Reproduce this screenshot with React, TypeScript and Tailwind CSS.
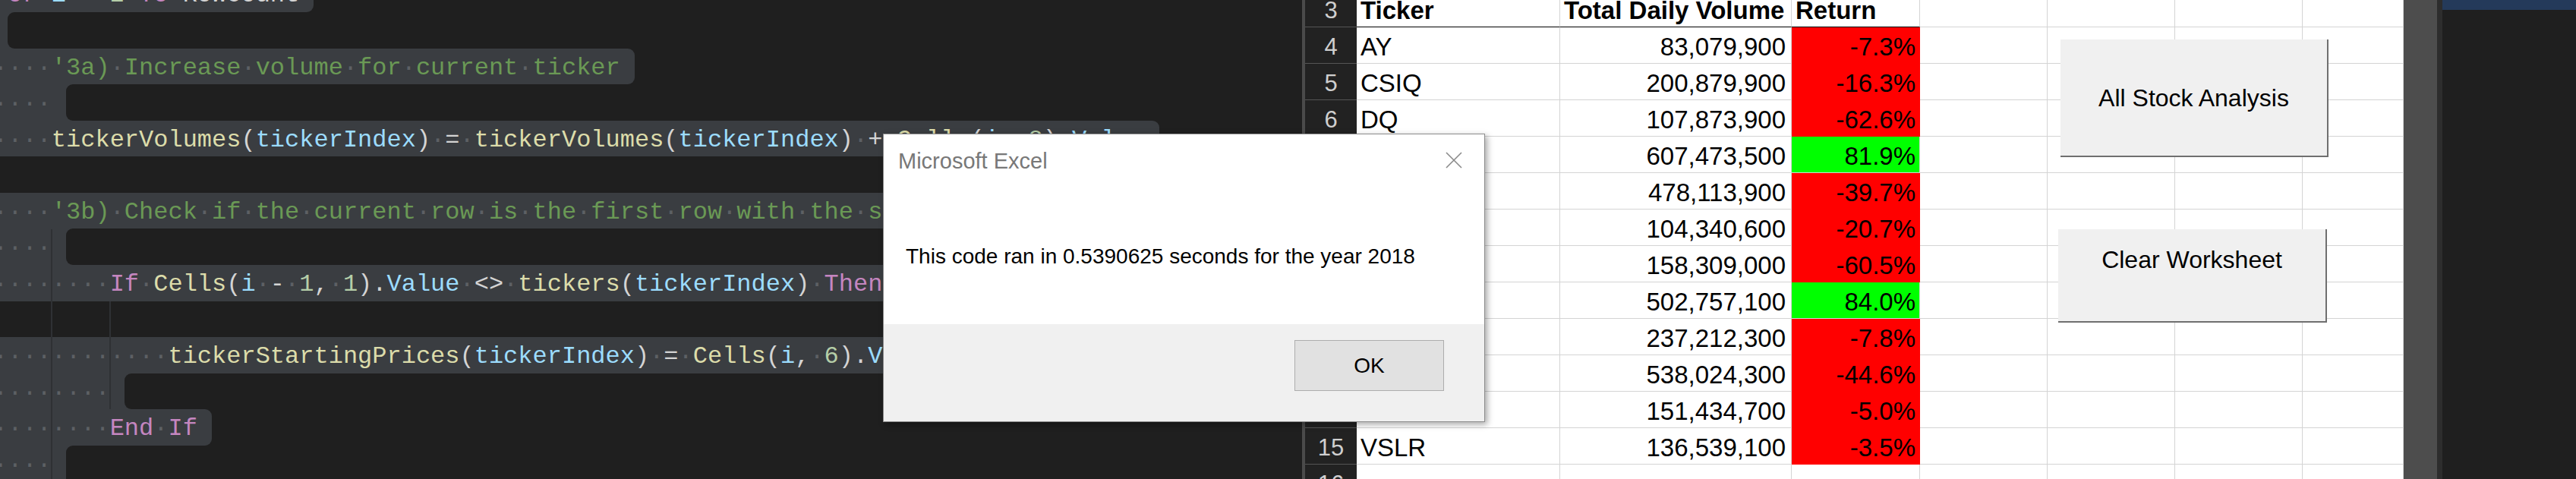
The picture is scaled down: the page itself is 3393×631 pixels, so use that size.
import React from 'react'

type Tok = [string, string]

const CW = 19.2

const kw = 'text-[#c586c0]'
const fn = 'text-[#dcdcaa]'
const vr = 'text-[#9cdcfe]'
const nm = 'text-[#b5cea8]'
const op = 'text-[#d4d4d4]'
const cm = 'text-[#6a9955]'

const ws = (n: number): Tok => [' '.repeat(n), op]

// code lines, top to bottom; sel = selected width in chars (undefined -> text length + 1)
const codeLines: { toks: Tok[]; sel?: number }[] = [
  { toks: [['For', kw], [' ', op], ['i', vr], [' = ', op], ['2', nm], [' ', op], ['To', kw], [' ', op], ['RowCount', op]] },
  { toks: [], sel: 1 },
  { toks: [ws(4), ["'3a) Increase volume for current ticker", cm]] },
  { toks: [ws(4)] },
  {
    toks: [
      ws(4), ['tickerVolumes', fn], ['(', op], ['tickerIndex', vr], [')', op], [' = ', op],
      ['tickerVolumes', fn], ['(', op], ['tickerIndex', vr], [')', op], [' + ', op],
      ['Cells', fn], ['(', op], ['i', vr], [', ', op], ['8', nm], [')', op], ['.', op], ['Value', vr],
    ],
  },
  { toks: [], sel: 0 },
  { toks: [ws(4), ["'3b) Check if the current row is the first row with the selected tickerIndex.", cm]] },
  { toks: [ws(4)] },
  {
    toks: [
      ws(8), ['If', kw], [' ', op], ['Cells', fn], ['(', op], ['i', vr], [' - ', op], ['1', nm], [', ', op],
      ['1', nm], [')', op], ['.', op], ['Value', vr], [' <> ', op], ['tickers', fn], ['(', op],
      ['tickerIndex', vr], [')', op], [' ', op], ['Then', kw],
    ],
  },
  { toks: [], sel: 0 },
  {
    toks: [
      ws(12), ['tickerStartingPrices', fn], ['(', op], ['tickerIndex', vr], [')', op], [' = ', op],
      ['Cells', fn], ['(', op], ['i', vr], [', ', op], ['6', nm], [')', op], ['.', op], ['Value', vr],
    ],
  },
  { toks: [ws(8)] },
  { toks: [ws(8), ['End If', kw]] },
  { toks: [ws(4)] },
  { toks: [ws(4)] },
]

const selChars = codeLines.map((l) =>
  l.sel !== undefined ? l.sel : l.toks.reduce((s, t) => s + t[0].length, 0) + 1
)

function renderToks(toks: Tok[]) {
  const out: React.ReactNode[] = []
  toks.forEach(([text, cls], ti) => {
    text.split(/( +)/).forEach((part, pi) => {
      if (!part) return
      if (part[0] === ' ') {
        out.push(
          <span key={`${ti}-${pi}`} className="text-[#5d6064]">
            {'·'.repeat(part.length)}
          </span>
        )
      } else {
        out.push(
          <span key={`${ti}-${pi}`} className={cls}>
            {part}
          </span>
        )
      }
    })
  })
  return out
}

function CodeLine({ idx }: { idx: number }) {
  const w = selChars[idx]
  const prev = idx > 0 ? selChars[idx - 1] : 0
  const next = idx < selChars.length - 1 ? selChars[idx + 1] : 0
  return (
    <div className="flex h-[47.6px] shrink-0">
      <div
        className={`h-full shrink-0 overflow-visible whitespace-pre bg-[#3a3d41] leading-[52px] ${
          prev < w ? 'rounded-tr-[9px]' : ''
        } ${next < w ? 'rounded-br-[9px]' : ''}`}
        style={{ width: `${w * CW}px` }}
      >
        {renderToks(codeLines[idx].toks)}
      </div>
      <div className="h-full flex-1 bg-[#3a3d41]">
        <div
          className={`h-full w-full bg-[#1f1f1f] ${prev > w ? 'rounded-tl-[9px]' : ''} ${
            next > w ? 'rounded-bl-[9px]' : ''
          }`}
        />
      </div>
    </div>
  )
}

const rows: [string, string, string, boolean][] = [
  ['AY', '83,079,900', '-7.3%', false],
  ['CSIQ', '200,879,900', '-16.3%', false],
  ['DQ', '107,873,900', '-62.6%', false],
  ['ENPH', '607,473,500', '81.9%', true],
  ['FSLR', '478,113,900', '-39.7%', false],
  ['HASI', '104,340,600', '-20.7%', false],
  ['JKS', '158,309,000', '-60.5%', false],
  ['RUN', '502,757,100', '84.0%', true],
  ['SEDG', '237,212,300', '-7.8%', false],
  ['SPWR', '538,024,300', '-44.6%', false],
  ['TERP', '151,434,700', '-5.0%', false],
  ['VSLR', '136,539,100', '-3.5%', false],
]

const cell = 'shrink-0 border-r border-b border-[#d4d4d4] overflow-hidden whitespace-nowrap leading-[52px]'

function EmptyCells() {
  return (
    <>
      <div className={`${cell} w-[168px]`} />
      <div className={`${cell} w-[168px]`} />
      <div className={`${cell} w-[168px]`} />
      <div className={`${cell} w-[133px]`} />
    </>
  )
}

function RowHead({ n }: { n: number }) {
  return (
    <div className="w-[68px] shrink-0 border-b border-[#555555] bg-[#222222] text-center text-[31px] leading-[52px] text-[#cfcfcf]">
      {n}
    </div>
  )
}

export default function App() {
  return (
    <div className="relative flex h-[631px] w-[3393px] overflow-hidden bg-[#1f1f1f]">
      {/* VS Code editor with selected VBA */}
      <div className="relative w-[1715px] shrink-0 overflow-hidden font-['Liberation_Mono',monospace] text-[32px]">
        <div className="-ml-[9px] -mt-[31.7px] flex flex-col">
          {codeLines.map((_, i) => (
            <CodeLine key={i} idx={i} />
          ))}
        </div>
        {/* indent guides */}
        <div className="absolute left-[67px] top-[302px] h-[340px] w-[2px] bg-[#2f3134]" />
        <div className="absolute left-[144px] top-[397px] h-[142px] w-[2px] bg-[#2f3134]" />
      </div>

      {/* Excel sheet */}
      <div className="relative flex shrink-0 font-['Liberation_Sans',Arial,sans-serif] text-[33px] text-black">
        <div className="w-[4px] shrink-0 bg-[#4b4b4b]" />
        <div className="-mt-[12px] flex flex-col bg-white">
          <div className="flex h-[48px]">
            <RowHead n={3} />
            <div className={`${cell} w-[268px] border-b-black pl-[5px] font-bold`}>Ticker</div>
            <div className={`${cell} w-[305px] border-b-black pl-[5px] font-bold`}>Total Daily Volume</div>
            <div className={`${cell} w-[169px] border-b-black pl-[5px] font-bold`}>Return</div>
            <EmptyCells />
          </div>
          {rows.map(([t, v, r, up], i) => (
            <div key={t} className="flex h-[48px]">
              <RowHead n={i + 4} />
              <div className={`${cell} w-[268px] pl-[5px]`}>{t}</div>
              <div className={`${cell} w-[305px] pr-[7px] text-right`}>{v}</div>
              <div
                className={`${cell} w-[169px] pr-[5px] text-right ${
                  up ? 'border-[#00ff00] bg-[#00ff00]' : 'border-[#ff0000] bg-[#ff0000]'
                }`}
              >
                {r}
              </div>
              <EmptyCells />
            </div>
          ))}
          <div className="flex h-[48px]">
            <RowHead n={16} />
            <div className={`${cell} w-[268px]`} />
            <div className={`${cell} w-[305px]`} />
            <div className={`${cell} w-[169px]`} />
            <EmptyCells />
          </div>
        </div>

        {/* macro buttons */}
        <div className="absolute left-[999px] top-[52px] flex h-[155px] w-[353px] items-center justify-center border-r-2 border-b-2 border-[#6f6f6f] bg-[#f0f0f0] text-[32px]">
          All Stock Analysis
        </div>
        <div className="absolute left-[996px] top-[302px] flex h-[123px] w-[354px] justify-center border-r-2 border-b-2 border-[#6f6f6f] bg-[#f0f0f0] pt-[20px] text-[32px] leading-[40px]">
          Clear Worksheet
        </div>

        <div className="w-[44px] shrink-0 bg-[#4d4d4d]" />
        <div className="w-[7px] shrink-0 bg-[#2d2d2d]" />
      </div>

      {/* right editor strip */}
      <div className="flex flex-1 flex-col">
        <div className="h-[13px] bg-[#243a5a]" />
      </div>

      {/* message box */}
      <div className="absolute left-[1163px] top-[176px] flex h-[380px] w-[793px] flex-col border border-[#8c8c8c] bg-white font-['Liberation_Sans',Arial,sans-serif] shadow-[3px_3px_8px_rgba(0,0,0,0.35)]">
        <div className="relative h-[250px]">
          <div className="pl-[19px] pt-[17px] text-[29px] leading-[36px] text-[#787878]">Microsoft Excel</div>
          <div className="mt-[90px] pl-[29px] text-[28px] leading-[36px] text-black">
            This code ran in 0.5390625 seconds for the year 2018
          </div>
          <svg className="absolute left-[740px] top-[23px]" width="22" height="22" viewBox="0 0 22 22">
            <path d="M1 1 L21 21 M21 1 L1 21" stroke="#8a8a8a" strokeWidth="1.6" fill="none" />
          </svg>
        </div>
        <div className="flex flex-1 items-start justify-end bg-[#f0f0f0] pr-[53px] pt-[21px]">
          <div className="flex h-[67px] w-[197px] items-center justify-center border border-[#adadad] bg-[#e1e1e1] text-[28px] text-black">
            OK
          </div>
        </div>
      </div>
    </div>
  )
}
